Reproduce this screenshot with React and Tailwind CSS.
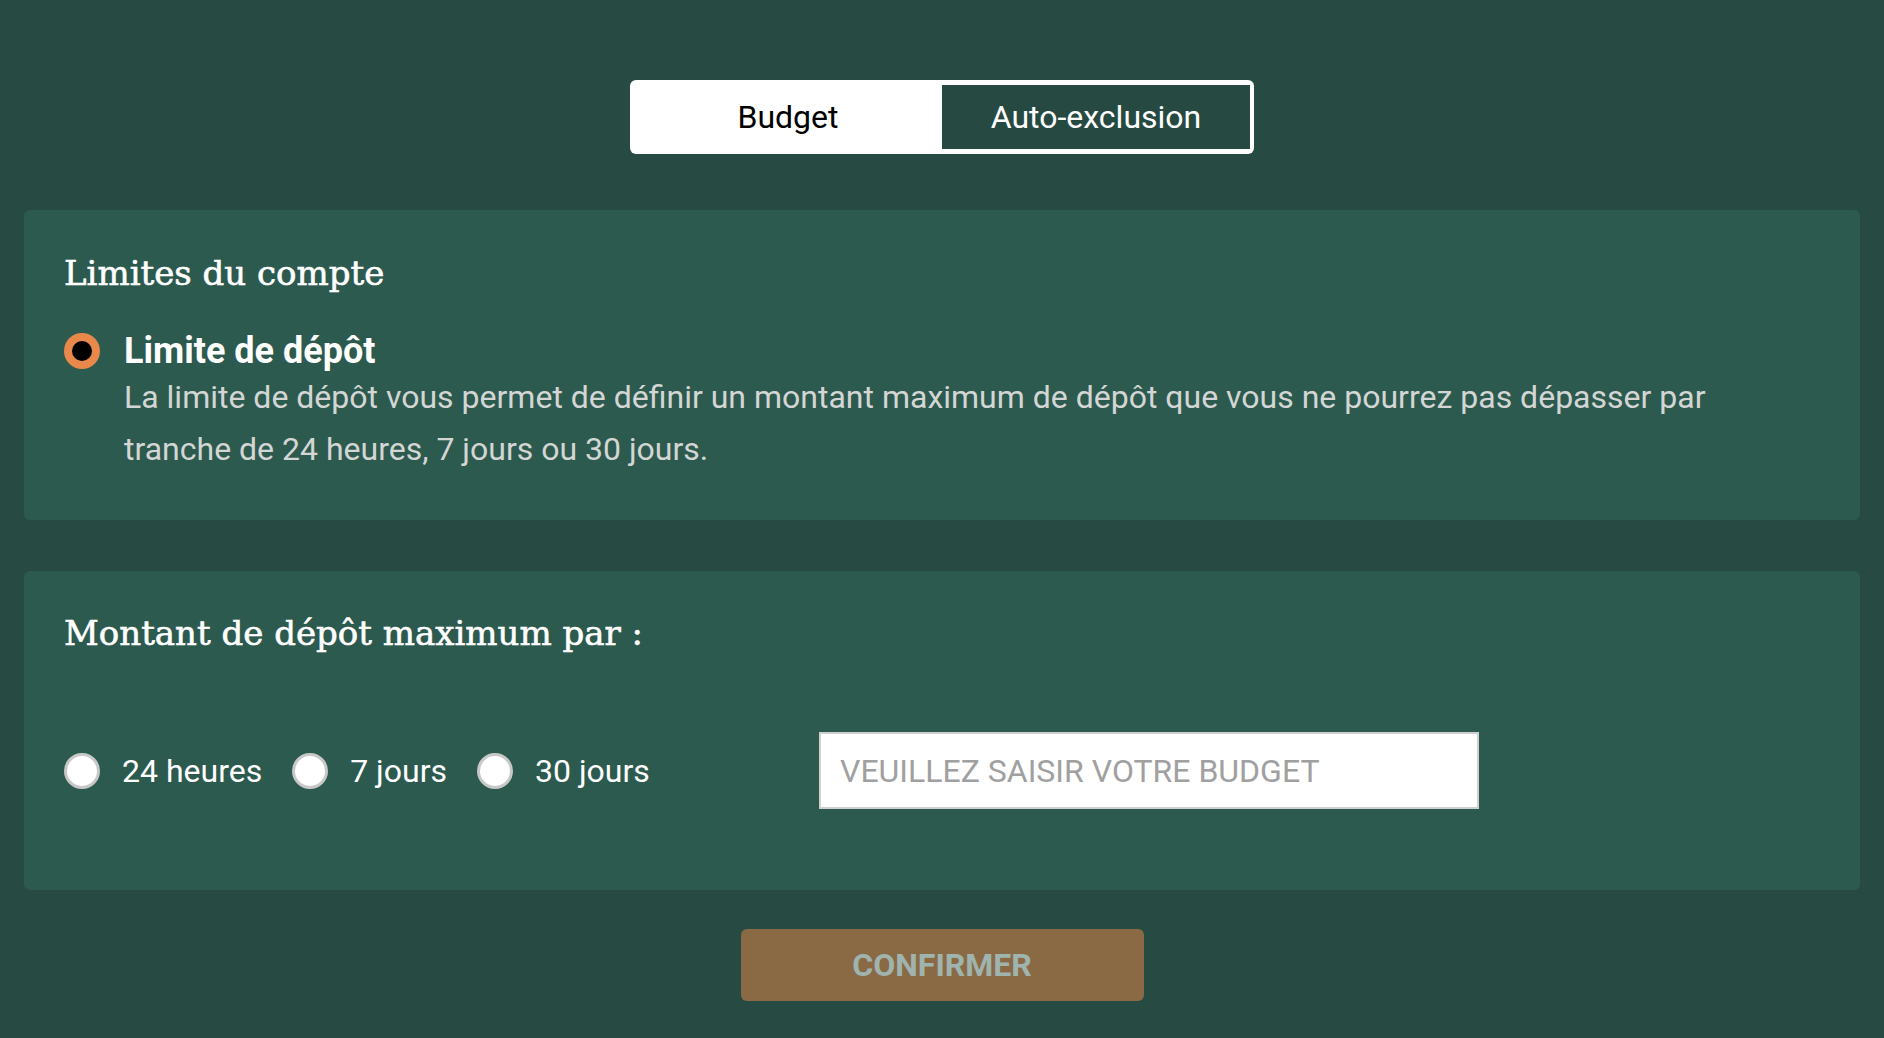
import React from "react";

function OrangeRadio() {
  return (
    <div className="w-[36px] h-[36px] shrink-0 rounded-full bg-[#e8884a] flex items-center justify-center">
      <div className="w-[20px] h-[20px] rounded-full bg-black" />
    </div>
  );
}

function WhiteRadio() {
  return <div className="w-[36px] h-[36px] shrink-0 rounded-full bg-white border-[3px] border-[#c8c8c8]" />;
}

export default function App() {
  return (
    <div
      className="min-h-screen w-full bg-[#274b43] px-[24px] pt-[80px] flex flex-col items-center"
      style={{ fontFamily: "Roboto, 'Liberation Sans', sans-serif" }}
    >
      <div className="w-[624px] h-[74px] bg-white rounded-[6px] px-[4px] py-[5px] flex">
        <button className="flex-1 text-[32px] text-black leading-none">Budget</button>
        <button className="flex-1 bg-[#264a42] text-[32px] text-white leading-none">Auto-exclusion</button>
      </div>

      <div className="w-full mt-[56px] bg-[#2d5a4f] rounded-[6px] pl-[40px] pr-[40px] pt-[43px] pb-[45px]">
        <h2
          className="text-[34px] leading-[40px] text-white [-webkit-text-stroke:0.6px_white]"
          style={{ fontFamily: "'DejaVu Serif', 'Liberation Serif', serif" }}
        >
          Limites du compte
        </h2>
        <div className="flex items-start gap-[24px] mt-[38px]">
          <div className="mt-[2px]">
            <OrangeRadio />
          </div>
          <div className="flex flex-col">
            <div className="text-[36px] leading-[40px] font-bold text-white">Limite de dépôt</div>
            <p className="text-[32px] leading-[52px] text-[#d3d6d4] max-w-[1620px]">
              La limite de dépôt vous permet de définir un montant maximum de dépôt que vous ne pourrez pas dépasser par tranche de 24 heures, 7 jours ou 30 jours.
            </p>
          </div>
        </div>
      </div>

      <div className="w-full mt-[51px] bg-[#2d5a4f] rounded-[6px] pl-[40px] pr-[40px] pt-[42px] pb-[81px]">
        <h2
          className="text-[34px] leading-[40px] text-white [-webkit-text-stroke:0.6px_white]"
          style={{ fontFamily: "'DejaVu Serif', 'Liberation Serif', serif" }}
        >
          Montant de dépôt maximum par :
        </h2>
        <div className="flex items-center mt-[79px]">
          <div className="w-[755px] shrink-0 flex items-center gap-[30px]">
            <label className="flex items-center gap-[22px]">
              <WhiteRadio />
              <span className="text-[32px] text-white leading-none">24 heures</span>
            </label>
            <label className="flex items-center gap-[22px]">
              <WhiteRadio />
              <span className="text-[32px] text-white leading-none">7 jours</span>
            </label>
            <label className="flex items-center gap-[22px]">
              <WhiteRadio />
              <span className="text-[32px] text-white leading-none">30 jours</span>
            </label>
          </div>
          <input
            type="text"
            placeholder="VEUILLEZ SAISIR VOTRE BUDGET"
            className="w-[660px] h-[77px] bg-white border-2 border-[#cfcfcf] pl-[19px] text-[32px] text-black placeholder:text-[#a0a0a0] outline-none"
          />
        </div>
      </div>

      <button className="mt-[39px] w-[403px] h-[72px] rounded-[6px] bg-[#8a6a45] text-[32px] font-bold text-[#9fb4ae]">
        CONFIRMER
      </button>
    </div>
  );
}
